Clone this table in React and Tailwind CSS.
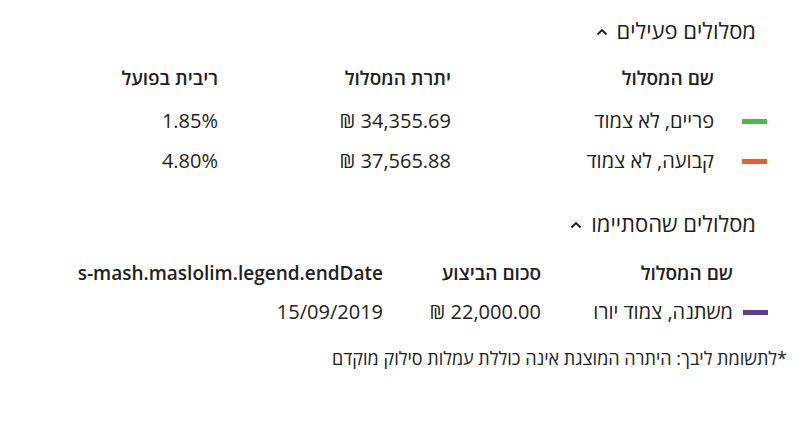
export default function App() {
  const Chevron = () => (
    <svg width="12" height="8" viewBox="0 0 12 8" className="mt-[3px]">
      <polyline points="1.5,6.5 6,2 10.5,6.5" fill="none" stroke="#1a1a1a" strokeWidth="1.8" />
    </svg>
  );
  return (
    <div dir="rtl" className="w-[796px] h-[437px] bg-white text-[#212121] pr-[9px] pt-[14px]" style={{ fontFamily: '"Open Sans", "Noto Sans", sans-serif' }}>
      <div className="flex items-center gap-[9px] mr-[31px] h-[32px]">
        <span className="text-[22px] leading-none">מסלולים פעילים</span>
        <Chevron />
      </div>
      <div className="mr-[20px] mt-[17px]">
        <div className="grid grid-cols-[53px_263px_233px_1fr] h-[30px] items-center text-[19px] font-semibold">
          <div></div>
          <div>שם המסלול</div>
          <div>יתרת המסלול</div>
          <div>ריבית בפועל</div>
        </div>
        <div className="grid grid-cols-[53px_263px_233px_1fr] h-[40px] mt-[8px] items-center text-[20px]">
          <div><div className="w-[25px] h-[5px] bg-[#4cb84a]"></div></div>
          <div>פריים, לא צמוד</div>
          <div>34,355.69 ₪</div>
          <div>1.85%</div>
        </div>
        <div className="grid grid-cols-[53px_263px_233px_1fr] h-[40px] items-center text-[20px]">
          <div><div className="w-[25px] h-[5px] bg-[#ec5f2b]"></div></div>
          <div>קבועה, לא צמוד</div>
          <div>37,565.88 ₪</div>
          <div>4.80%</div>
        </div>
      </div>
      <div className="flex items-center gap-[9px] mr-[31px] h-[32px] mt-[26px]">
        <span className="text-[22px] leading-none">מסלולים שהסתיימו</span>
        <Chevron />
      </div>
      <div className="mr-[19px] mt-[19px]">
        <div className="grid grid-cols-[35px_192px_158px_1fr] h-[30px] items-center text-[19px] font-semibold">
          <div></div>
          <div>שם המסלול</div>
          <div>סכום הביצוע</div>
          <div>s-mash.maslolim.legend.endDate</div>
        </div>
        <div className="grid grid-cols-[35px_192px_158px_1fr] h-[40px] mt-[4px] items-center text-[20px]">
          <div><div className="w-[25px] h-[5px] bg-[#5b3d96]"></div></div>
          <div>משתנה, צמוד יורו</div>
          <div>22,000.00 ₪</div>
          <div>15/09/2019</div>
        </div>
      </div>
      <div className="mt-[11px] text-[18px] h-[30px] flex items-center">*לתשומת ליבך: היתרה המוצגת אינה כוללת עמלות סילוק מוקדם</div>
    </div>
  );
}
